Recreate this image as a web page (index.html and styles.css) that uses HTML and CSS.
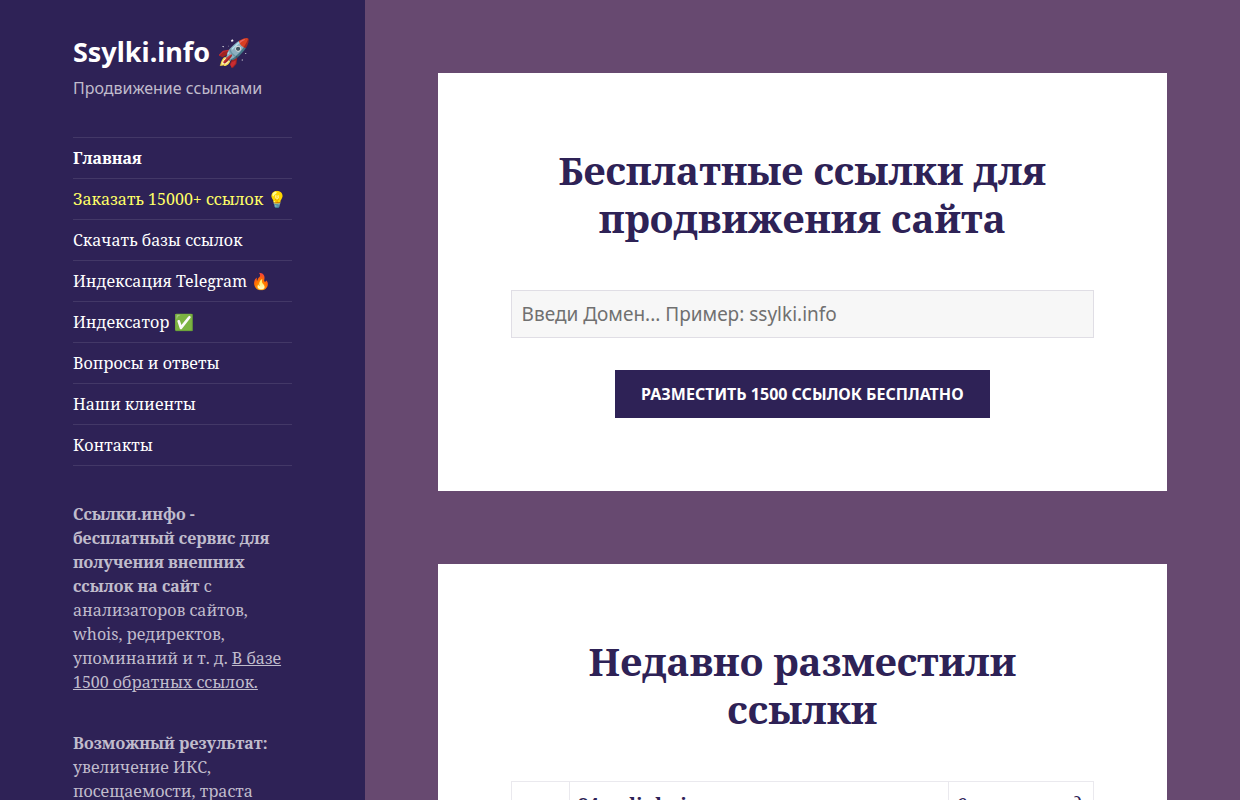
FILE: index.html
```
<!DOCTYPE html>
<html lang="ru">
<head>
<meta charset="utf-8">
<meta name="viewport" content="width=device-width, initial-scale=1">
<title>Ssylki.info</title>
<link rel="stylesheet" href="styles.css">
</head>
<body>
<div class="site">
  <aside class="sidebar">
    <header class="branding">
      <h2 class="site-title"><a href="#">Ssylki.info 🚀</a></h2>
      <p class="site-description">Продвижение ссылками</p>
    </header>
    <nav>
      <ul class="menu">
        <li><a class="current" href="#">Главная</a></li>
        <li><a class="promo" href="#">Заказать 15000+ ссылок 💡</a></li>
        <li><a href="#">Скачать базы ссылок</a></li>
        <li><a href="#">Индексация Telegram 🔥</a></li>
        <li><a href="#">Индексатор ✅</a></li>
        <li><a href="#">Вопросы и ответы</a></li>
        <li><a href="#">Наши клиенты</a></li>
        <li><a href="#">Контакты</a></li>
      </ul>
    </nav>
    <div class="widget">
      <p><strong>Ссылки.инфо - бесплатный сервис для получения внешних ссылок на сайт</strong> с анализаторов сайтов, whois, редиректов, упоминаний и т. д. <a href="#">В базе 1500 обратных ссылок.</a></p>
      <p><strong>Возможный результат:</strong> увеличение ИКС, посещаемости, траста</p>
    </div>
  </aside>
  <main class="content">
    <section class="card">
      <h1 class="card-title">Бесплатные ссылки для продвижения сайта</h1>
      <form class="form">
        <input class="domain" type="text" aria-label="Домен" placeholder="Введи Домен... Пример: ssylki.info">
        <button class="submit" type="button">Разместить 1500 ссылок бесплатно</button>
      </form>
    </section>
    <section class="card">
      <h2 class="card-title">Недавно разместили ссылки</h2>
      <table class="recent">
        <tbody>
          <tr><td class="icon"></td><td><strong>84.onlinkr.is</strong></td><td class="time"><em>9 часов назад</em></td></tr>
        </tbody>
      </table>
    </section>
  </main>
</div>
</body>
</html>
```
FILE: styles.css
```
* {
  box-sizing: border-box;
}

html,
body {
  height: 100%;
}

body {
  margin: 0;
  background: #674970;
  color: #2e2256;
  font-family: "Noto Serif", "Liberation Serif", serif;
  font-size: 19px;
  line-height: 32px;
}

.site {
  display: grid;
  grid-template-columns: 5fr 12fr;
  height: 100%;
  overflow: hidden;
}

.sidebar {
  padding: 32px 20% 0;
  background: #2e2256;
  color: #c0bccc;
  font-size: 16px;
  line-height: 24px;
}

.branding {
  margin-bottom: 37px;
  font-family: "Noto Sans", sans-serif;
}

.site-title {
  margin: 0 0 4px;
  font-size: 27px;
  line-height: 40px;
}

.site-title a {
  color: #fff;
  text-decoration: none;
}

.site-description {
  margin: 0;
}

.menu {
  margin: 0 0 36px;
  padding: 0;
  border-bottom: 1px solid #433867;
  list-style: none;
}

.menu a {
  display: block;
  padding: 8px 0;
  border-top: 1px solid #433867;
  color: #fff;
  text-decoration: none;
  white-space: nowrap;
}

.menu .current {
  font-weight: 700;
}

.menu .promo {
  color: #ffff66;
}

.widget p {
  margin: 0 0 37px;
}

.widget a {
  color: inherit;
}

.content {
  padding: 73px calc(100% / 12);
}

.card {
  margin-bottom: 73px;
  padding: 73px 10%;
  background: #fff;
}

.card-title {
  margin: 0 0 48px;
  font-size: 39px;
  font-weight: 700;
  line-height: 48px;
  text-align: center;
}

.form {
  display: flex;
  flex-direction: column;
  align-items: center;
  gap: 32px;
}

.domain {
  width: 100%;
  height: 48px;
  padding: 0 10px;
  border: 1px solid #e0dee5;
  border-radius: 0;
  background: #f7f7f7;
  color: #707070;
  font-family: "Noto Sans", sans-serif;
  font-size: 19px;
}

.domain::placeholder {
  color: #707070;
  opacity: 1;
}

.submit {
  height: 48px;
  padding: 0 26px;
  border: 0;
  background: #2e2256;
  color: #fff;
  font-family: "Noto Sans", sans-serif;
  font-size: 16px;
  font-weight: 700;
  text-transform: uppercase;
}

.recent {
  width: 100%;
  border-collapse: collapse;
  table-layout: fixed;
}

.recent td {
  padding: 7px 8px;
  border: 1px solid #eae9ee;
  white-space: nowrap;
}

.icon {
  width: 10%;
}

.time {
  width: 25%;
}
```
